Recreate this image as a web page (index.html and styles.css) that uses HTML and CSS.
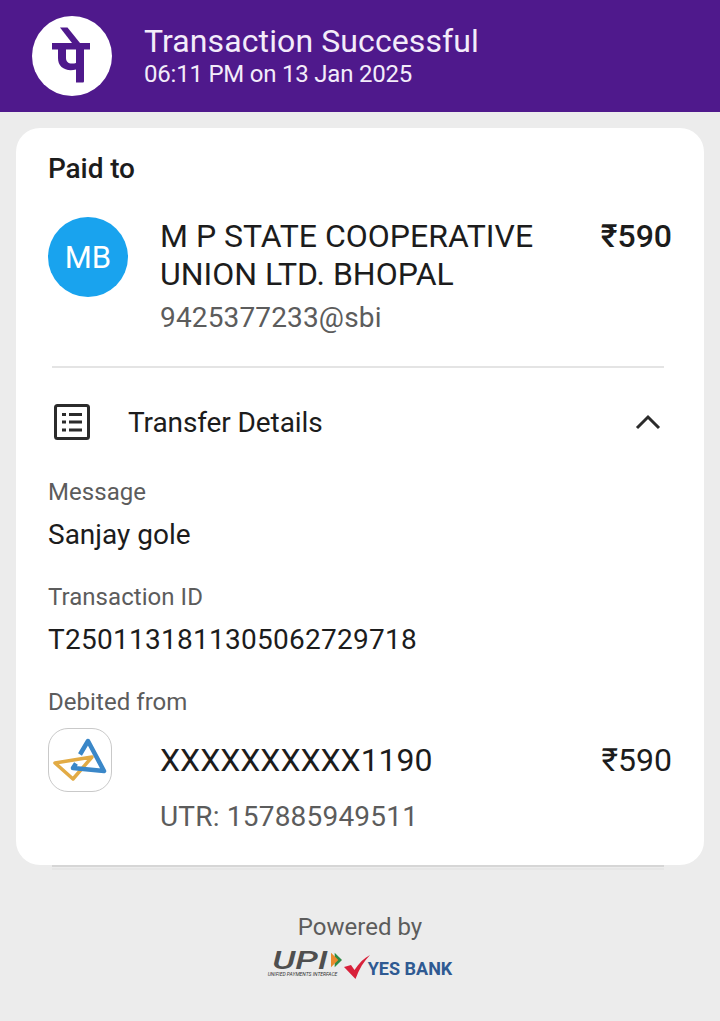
FILE: index.html
```html
<!DOCTYPE html>
<html lang="en">
<head>
<meta charset="utf-8">
<title>Transaction Successful</title>
<link rel="stylesheet" href="styles.css">
</head>
<body>
<header class="header">
  <div class="logo">
    <svg class="logo-glyph" viewBox="0 0 80 80" width="80" height="80" aria-hidden="true">
      <path class="glyph-fill" d="M20 27 H58 V33.500 H52 V65 C52 66 51.500 66.500 50.500 66.500 H44 V53.500 C38 55 33 54 29.500 51 C27 48.500 26 45.500 26 42 V33.500 H20 Z M34 33.500 V42 C34 45.500 36 47.500 40 47.500 C41.500 47.500 43 47.300 44 46.900 V33.500 Z"/>
      <path class="glyph-fill" d="M28 11.500 H35.500 L48 27 H40 Z"/>
    </svg>
  </div>
  <div class="header-text">
    <div class="header-title">Transaction Successful</div>
    <div class="header-sub">06:11 PM on 13 Jan 2025</div>
  </div>
</header>

<main class="card">
  <div class="paid-label">Paid to</div>
  <div class="payee">
    <div class="avatar">MB</div>
    <div class="payee-info">
      <div class="payee-name">M P STATE COOPERATIVE<br>UNION LTD. BHOPAL</div>
      <div class="payee-upi">9425377233@sbi</div>
    </div>
    <div class="payee-amount">₹590</div>
  </div>
  <div class="divider"></div>
  <div class="details-head">
    <svg class="details-icon" viewBox="0 0 36 36" width="36" height="36" aria-hidden="true">
      <rect class="icon-line" x="1.500" y="1.500" width="33" height="33" rx="2"/>
      <rect class="icon-solid" x="8" y="9" width="4" height="3"/>
      <rect class="icon-solid" x="8" y="16.500" width="4" height="3"/>
      <rect class="icon-solid" x="8" y="24.500" width="4" height="3"/>
      <rect class="icon-solid" x="15" y="9" width="13" height="3"/>
      <rect class="icon-solid" x="15" y="16.500" width="13" height="3"/>
      <rect class="icon-solid" x="15" y="24.500" width="13" height="3"/>
    </svg>
    <div class="details-title">Transfer Details</div>
    <svg class="chevron" viewBox="0 0 26 16" width="26" height="16" aria-hidden="true">
      <path class="chevron-line" d="M2 14 L13 3 L24 14"/>
    </svg>
  </div>
  <section class="field">
    <div class="field-label">Message</div>
    <div class="field-value">Sanjay gole</div>
  </section>
  <section class="field">
    <div class="field-label">Transaction ID</div>
    <div class="field-value field-id">T2501131811305062729718</div>
  </section>
  <section class="field">
    <div class="field-label">Debited from</div>
    <div class="debit">
      <div class="bank-icon">
        <svg viewBox="0 0 64 64" width="64" height="64" aria-hidden="true">
          <path class="sbi-gold" d="M7 35 L44 29 L25 51 Z"/>
          <path class="sbi-blue" d="M32 26.500 L40 13 L56 43 L25 40 L28 35.500"/>
        </svg>
      </div>
      <div class="debit-info">
        <div class="debit-acct">XXXXXXXXXX1190</div>
        <div class="debit-utr">UTR: 157885949511</div>
      </div>
      <div class="debit-amount">₹590</div>
    </div>
  </section>
</main>

<footer class="footer">
  <div class="powered">Powered by</div>
  <div class="brands">
    <div class="upi">
      <div class="upi-row">
        <span class="upi-word">UPI</span>
        <svg class="upi-arrows" viewBox="0 0 12 18" width="11" height="18" aria-hidden="true">
          <path class="upi-green" d="M4 1 L12 9 L4 17 Z"/>
          <path class="upi-orange" d="M0 1 L8 9 L0 17 Z"/>
        </svg>
      </div>
      <div class="upi-small">UNIFIED PAYMENTS INTERFACE</div>
    </div>
    <svg class="tick" viewBox="0 0 26 24" width="26" height="24" aria-hidden="true">
      <path class="tick-path" d="M0 12 L7 10 L10.500 15 C15 8 20 3 26 0 C20 6 15 14 11.500 24 Z"/>
    </svg>
    <span class="yes">YES BANK</span>
  </div>
</footer>
</body>
</html>
```
FILE: styles.css
```css
* { box-sizing: border-box; }
html, body { margin: 0; padding: 0; }
body {
  width: 720px;
  height: 1021px;
  overflow: hidden;
  background: #ececec;
  font-family: Roboto, "Liberation Sans", sans-serif;
  color: #1c1c1c;
}
.header {
  height: 112px;
  background: #4f198c;
  display: flex;
  align-items: center;
  padding: 0 32px;
  gap: 32px;
}
.logo {
  width: 80px;
  height: 80px;
  border-radius: 50%;
  background: #fff;
  flex: none;
}
.logo-glyph { display: block; }
.glyph-fill { fill: #4f198c; }
.header-text { color: #f3ecfa; margin-top: -2px; }
.header-title { font-size: 32px; line-height: 38px; letter-spacing: 0.1px; }
.header-sub { font-size: 24px; line-height: 28px; letter-spacing: -0.22px; }

.card {
  margin: 16px 16px 0;
  height: 737px;
  background: #fff;
  border-radius: 24px;
  padding: 24px 32px 0;
  position: relative;
}
.card::after {
  content: "";
  position: absolute;
  left: 36px;
  right: 40px;
  bottom: -2px;
  height: 2px;
  background: #d6d6d6;
  box-shadow: 0 3px 0 #e6e6e6;
}
.paid-label { font-size: 28px; font-weight: 500; line-height: 34px; letter-spacing: -0.1px; }
.payee { display: flex; margin-top: 31px; }
.avatar {
  width: 80px;
  height: 80px;
  border-radius: 50%;
  background: #19a3ee;
  color: #fff;
  font-size: 31px;
  display: flex;
  align-items: center;
  justify-content: center;
  flex: none;
}
.payee-info { margin-left: 32px; flex: 1; }
.payee-name { font-size: 32px; line-height: 38px; }
.payee-upi { font-size: 28px; line-height: 34px; color: #5c5c5c; margin-top: 8px; letter-spacing: 0.15px; }
.payee-amount { font-size: 32px; font-weight: 500; line-height: 38px; }
.divider { height: 2px; background: #e4e4e4; margin: 31px 8px 0 4px; }
.details-head {
  display: flex;
  align-items: center;
  height: 108px;
  padding-left: 6px;
  padding-right: 11px;
}
.details-icon { flex: none; }
.icon-line { fill: none; stroke: #2b2b2b; stroke-width: 3; }
.icon-solid { fill: #2b2b2b; }
.details-title { font-size: 28px; margin-left: 38px; flex: 1; letter-spacing: -0.1px; }
.chevron-line { fill: none; stroke: #2b2b2b; stroke-width: 3; }
.field { margin-bottom: 31px; }
.field:first-of-type { margin-top: 2px; }
.field-label { font-size: 24px; line-height: 29px; color: #5c5c5c; letter-spacing: 0.05px; }
.field-value { font-size: 28px; line-height: 34px; margin-top: 11px; }
.field-id { letter-spacing: 0.26px; }
.debit { display: flex; margin-top: 11px; }
.bank-icon {
  width: 64px;
  height: 64px;
  border: 1px solid #c9c9c9;
  border-radius: 20px;
  overflow: hidden;
  flex: none;
}
.bank-icon svg { display: block; margin: -1px; }
.sbi-blue { fill: none; stroke: #3a87c8; stroke-width: 4.500; stroke-linejoin: round; }
.sbi-gold { fill: none; stroke: #e2ab45; stroke-width: 3.500; stroke-linejoin: round; }
.debit-info { margin-left: 48px; flex: 1; }
.debit-acct { font-size: 32px; line-height: 38px; margin-top: 13px; }
.debit-utr { font-size: 28px; line-height: 34px; color: #5c5c5c; margin-top: 21px; letter-spacing: 0.2px; }
.debit-amount { font-size: 32px; line-height: 38px; margin-top: 13px; }

.footer { text-align: center; margin-top: 48px; }
.powered { font-size: 24px; line-height: 29px; color: #5c5c5c; }
.brands { display: flex; justify-content: center; align-items: flex-start; margin-top: 3px; gap: 2px; }
.upi { width: 74px; margin-top: 4px; }
.upi-row { display: flex; align-items: center; height: 22px; }
.upi-word {
  font-size: 26px;
  line-height: 22px;
  font-style: italic;
  font-weight: 500;
  color: #4f4f4f;
  display: block;
  width: 62px;
  padding-left: 3px;
  text-align: left;
  transform: scaleX(1.4);
  transform-origin: left center;
  white-space: nowrap;
}
.upi-arrows { flex: none; margin-left: 2px; }
.upi-small { font-size: 5px; line-height: 6px; color: #333; white-space: nowrap; font-style: italic; text-align: left; }
.upi-green { fill: #2e8b45; }
.upi-orange { fill: #ea8a2b; }
.tick { margin-top: 10px; flex: none; }
.tick-path { fill: #d8213a; }
.yes { font-size: 18px; font-weight: 700; color: #2f5a92; white-space: nowrap; margin-left: -4px; margin-top: 13px; }
```
